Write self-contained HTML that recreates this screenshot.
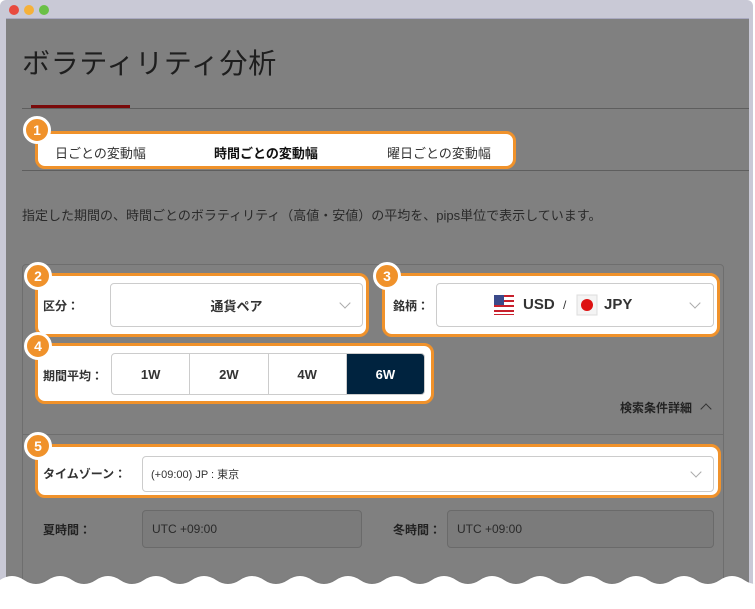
<!DOCTYPE html><html><head><meta charset="utf-8"><style>
*{margin:0;padding:0;box-sizing:border-box}
body{width:755px;height:609px;background:#fff;position:relative;overflow:hidden;font-family:"Liberation Sans","Noto Sans CJK JP",sans-serif;color:#222}
.a{position:absolute}
.hl{position:absolute;background:#fff;border:3px solid #f0922b;border-radius:10px}
.bd{position:absolute;width:28px;height:28px;border-radius:50%;background:#f0922b;border:3px solid #fff;color:#fff;font-weight:bold;font-size:14px;text-align:center;line-height:22px}
.lb{position:absolute;font-size:12px;font-weight:bold;color:#333}
.sel{position:absolute;background:#fff;border:1px solid #ccc;border-radius:4px}
.chev{position:absolute;width:8px;height:8px;border-right:1px solid #aaa;border-bottom:1px solid #aaa;transform:rotate(45deg)}
.gin{position:absolute;background:#7b7b7b;border:1px solid #6a6a6a;border-radius:4px;font-size:12px;color:#2a2a2a;padding-left:9px;line-height:36px}
</style></head><body>
<div class="a" style="left:0;top:0;width:753px;height:590px;background:#c9c9d6;border-radius:6px 6px 0 0"></div>
<div class="a" style="left:9px;top:5px;width:10px;height:10px;border-radius:50%;background:#e84a3f"></div>
<div class="a" style="left:24px;top:5px;width:10px;height:10px;border-radius:50%;background:#f5b13a"></div>
<div class="a" style="left:39px;top:5px;width:10px;height:10px;border-radius:50%;background:#6ac046"></div>
<div class="a" style="left:6px;top:18px;width:743px;height:580px;background:#808080;border-top:1px solid #a9a9c0"></div>
<div class="a" style="left:22px;top:42px;font-size:28px;color:#1e1e1e;letter-spacing:0.7px">ボラティリティ分析</div>
<div class="a" style="left:22px;top:108px;width:727px;height:1px;background:#5e5e5e"></div>
<div class="a" style="left:31px;top:105px;width:99px;height:3px;background:#7a0a0a"></div>
<div class="hl" style="left:35px;top:131px;width:481px;height:38px"></div>
<div class="bd" style="left:23px;top:116px">1</div>
<div class="a" style="left:55px;top:143px;font-size:13px;color:#333">日ごとの変動幅</div>
<div class="a" style="left:214px;top:143px;font-size:13px;font-weight:bold;color:#111">時間ごとの変動幅</div>
<div class="a" style="left:387px;top:143px;font-size:13px;color:#333">曜日ごとの変動幅</div>
<div class="a" style="left:22px;top:170px;width:727px;height:1px;background:#5e5e5e"></div>
<div class="a" style="left:22px;top:205px;font-size:13px;color:#2a2a2a">指定した期間の、時間ごとのボラティリティ（高値・安値）の平均を、pips単位で表示しています。</div>
<div class="a" style="left:22px;top:264px;width:702px;height:330px;border:1px solid #6e6e6e;border-radius:4px"></div>
<div class="a" style="left:23px;top:434px;width:700px;height:1px;background:#6e6e6e"></div>
<div class="hl" style="left:35px;top:273px;width:334px;height:64px"></div>
<div class="bd" style="left:24px;top:262px">2</div>
<div class="lb" style="left:43px;top:297px">区分：</div>
<div class="sel" style="left:110px;top:283px;width:253px;height:44px"><div class="a" style="left:0;right:0;top:12px;text-align:center;font-size:13px;font-weight:bold;color:#333">通貨ペア</div><div class="chev" style="left:230px;top:15px"></div></div>
<div class="hl" style="left:382px;top:273px;width:338px;height:64px"></div>
<div class="bd" style="left:373px;top:262px">3</div>
<div class="lb" style="left:393px;top:297px">銘柄：</div>
<div class="sel" style="left:436px;top:283px;width:278px;height:44px">
<svg class="a" style="left:56px;top:9px" width="22" height="24" viewBox="0 0 22 24"><rect x="1" y="2" width="20" height="20" fill="#fff"/><g fill="#c8202c"><rect x="1" y="2" width="20" height="2"/><rect x="1" y="7" width="20" height="2"/><rect x="1" y="12" width="20" height="2"/><rect x="1" y="17" width="20" height="2"/><rect x="1" y="21" width="20" height="1"/></g><rect x="1" y="2" width="10" height="10" fill="#3b4a8a"/></svg>
<div class="a" style="left:86px;top:12px;font-size:15px;font-weight:bold;color:#333">USD</div>
<div class="a" style="left:126px;top:14px;font-size:12px;color:#333">/</div>
<svg class="a" style="left:139px;top:9px" width="22" height="24" viewBox="0 0 22 24"><rect x="1" y="2" width="20" height="20" fill="#f4f4f4" stroke="#ddd"/><circle cx="11" cy="12" r="6" fill="#d11"/></svg>
<div class="a" style="left:167px;top:12px;font-size:15px;font-weight:bold;color:#333">JPY</div>
<div class="chev" style="left:254px;top:15px"></div></div>
<div class="hl" style="left:35px;top:343px;width:399px;height:61px"></div>
<div class="bd" style="left:24px;top:332px">4</div>
<div class="lb" style="left:43px;top:367px">期間平均：</div>
<div class="sel" style="left:111px;top:353px;width:314px;height:42px;overflow:hidden;display:flex;font-size:13px;font-weight:bold;color:#333">
<div style="flex:1;text-align:center;line-height:42px;border-right:1px solid #ccc">1W</div>
<div style="flex:1;text-align:center;line-height:42px;border-right:1px solid #ccc">2W</div>
<div style="flex:1;text-align:center;line-height:42px;border-right:1px solid #ccc">4W</div>
<div style="flex:1;text-align:center;line-height:42px;background:#00233f;color:#fff">6W</div></div>
<div class="a" style="left:620px;top:399px;font-size:12px;font-weight:bold;color:#222">検索条件詳細</div>
<div class="a" style="left:702px;top:405px;width:8px;height:8px;border-left:1px solid #333;border-top:1px solid #333;transform:rotate(45deg)"></div>
<div class="hl" style="left:35px;top:444px;width:686px;height:54px"></div>
<div class="bd" style="left:24px;top:432px">5</div>
<div class="lb" style="left:43px;top:465px">タイムゾーン：</div>
<div class="sel" style="left:142px;top:456px;width:572px;height:36px"><div class="a" style="left:8px;top:9px;font-size:11px;color:#333">(+09:00) JP : 東京</div><div class="chev" style="left:549px;top:11px"></div></div>
<div class="lb" style="left:43px;top:521px;color:#222">夏時間：</div>
<div class="gin" style="left:142px;top:510px;width:220px;height:38px">UTC +09:00</div>
<div class="lb" style="left:393px;top:521px;color:#222">冬時間：</div>
<div class="gin" style="left:447px;top:510px;width:267px;height:38px">UTC +09:00</div>
<svg class="a" style="left:0;top:568px" width="755" height="41" viewBox="0 0 755 41"><defs><filter id="s"><feDropShadow dx="0" dy="2" stdDeviation="1.5" flood-color="#000" flood-opacity="0.35"/></filter></defs>
<path filter="url(#s)" fill="#fff" d="M0,12 Q12,4 24,12 T48,12 T72,12 T96,12 T120,12 T144,12 T168,12 T192,12 T216,12 T240,12 T264,12 T288,12 T312,12 T336,12 T360,12 T384,12 T408,12 T432,12 T456,12 T480,12 T504,12 T528,12 T552,12 T576,12 T600,12 T624,12 T648,12 T672,12 T696,12 T720,12 T744,12 T768,12 L768,41 L0,41Z"/>
<path fill="#fff" d="M0,20 L755,20 L755,41 L0,41Z"/></svg>
</body></html>
